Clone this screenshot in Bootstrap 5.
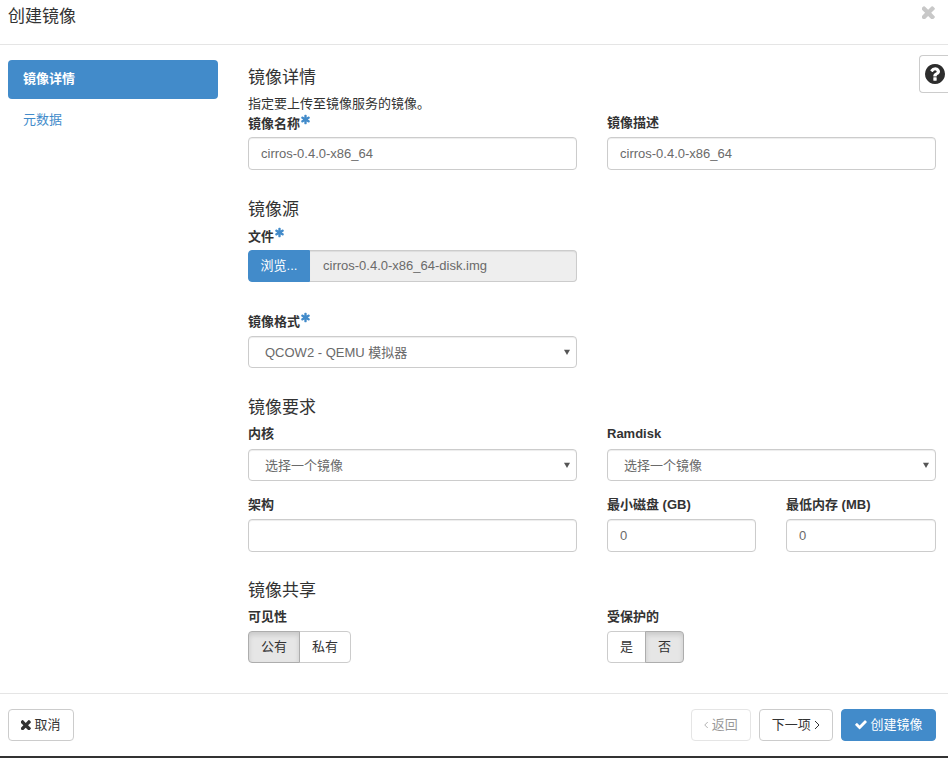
<!DOCTYPE html>
<html lang="zh-CN">
<head>
<meta charset="utf-8">
<title>创建镜像</title>
<link href="https://cdn.jsdelivr.net/npm/bootstrap@5.3.0/dist/css/bootstrap.min.css" rel="stylesheet">
<style>
html,body{height:100%}
body{margin:0;background:#fff;color:#333;font-family:"Liberation Sans","Noto Sans CJK SC",sans-serif;font-size:13px;line-height:18.57px;height:758px;overflow:hidden;border-bottom:2px solid #333}
.dlg-frame{height:756px;display:flex;flex-direction:column;position:relative}
.dlg-head{height:45px;border-bottom:1px solid #e5e5e5;padding:7px 8px 0;display:flex;justify-content:space-between;flex:none}
.dlg-title{font-size:17px;line-height:20px;margin:0;font-weight:400;color:#333}
.dlg-close{border:0;background:none;padding:0;margin:-1px 5px 0 0;height:13px;width:13px;color:#c8c8c8;line-height:0}
.dlg-body{flex:1;display:flex;padding:15px 12px 0 8px}
.side-col{width:210px;flex:none;margin-right:30px}
.side-col .nav-link{height:39px;padding:10px 15px;font-size:13px;line-height:18.57px;color:#428bca;border-radius:4px}
.side-col .nav-link.active{background:#428bca;color:#fff;font-weight:700}
.side-col .nav-item+.nav-item{margin-top:2px}
.main-col{flex:1;min-width:0}
.main-col .row{--bs-gutter-x:30px;--bs-gutter-y:0}
.sec-title{font-size:17px;line-height:20px;margin:8px 0 6px;font-weight:400;color:#333}
.sec-title.gap-img{margin-top:30px;margin-bottom:7px}
.sec-title.gap-req{margin-top:30px;margin-bottom:7px}
.sec-title.gap-share{margin-top:29px;margin-bottom:7px}
.sec-help{margin:0;line-height:20px;height:20px}
.fld-label{display:block;font-weight:700;margin:0 0 5px;line-height:18px;height:18px;color:#333;white-space:nowrap}
.req-star{width:11px;height:11px;fill:#428bca;display:inline-block;vertical-align:3px}
.form-control.fld-input,.form-select.fld-input{height:33px;padding:6px 12px;font-size:13px;line-height:19px;color:#6a6a6a;border:1px solid #ccc;border-radius:4px;box-shadow:inset 0 1px 1px rgba(0,0,0,.075);font-family:inherit}
.form-select.fld-input{height:32px;margin-top:6px;padding-left:16px;padding-right:24px;background-image:url("data:image/svg+xml,%3Csvg xmlns='http://www.w3.org/2000/svg' viewBox='0 0 8 8'%3E%3Cpath fill='%23555' d='M0 1h8L4 8z'/%3E%3C/svg%3E");background-size:6px 6px;background-position:right 6px center}
.file-pick{display:flex;height:32px}
.file-btn{width:62px;background:#428bca;color:#fff;border:1px solid #428bca;border-radius:4px 0 0 4px;padding:0;font-size:13px;flex:none}
.file-name{flex:1;background:#eee;border:1px solid #ccc;border-left:0;border-radius:0 4px 4px 0;padding:0 13px;color:#6a6a6a;line-height:30px;box-shadow:inset 0 1px 1px rgba(0,0,0,.075)}
.fmt-row{margin-top:30px}
.arch-row{margin-top:15px}
.main-col .row .disk-col{width:179px}
.main-col .row .ram-col{width:180px}
.toggle-grp .btn{height:32px;padding:0 12px;font-size:13px;line-height:30px;color:#333;border:1px solid #ccc;background:#fff;border-radius:4px}
.toggle-grp .btn.active{background:#e6e6e6;border-color:#adadad;color:#333;box-shadow:inset 0 3px 5px rgba(0,0,0,.125)}
.dlg-foot{height:63px;flex:none;border-top:1px solid #e5e5e5;padding:15px 12px 0 8px;display:flex;justify-content:space-between}
.foot-btn{height:32px;font-size:13px;line-height:18px;padding:6px 12px;border:1px solid #ccc;border-radius:4px;color:#333;background:#fff}
.foot-btn:disabled{color:#333;opacity:.5;border-color:#ccc;background:#fff}
.foot-btn.go-btn{background:#428bca;border-color:#428bca;color:#fff;padding-left:12.5px;padding-right:12.5px}
.foot-icon{width:10px;height:10px;fill:currentColor;vertical-align:-1px}
.go-btn .foot-icon{width:12px;height:11px}
.foot-ang{width:6px;height:10px;fill:none;stroke:currentColor;stroke-width:1;vertical-align:-1px}
.foot-ang.back-ang{width:4.5px}
.help-tab{position:absolute;right:0;top:55px;width:29px;height:38px;border:1px solid #ccc;border-right:0;border-radius:4px 0 0 4px;background:#fff;padding:0;display:flex;align-items:center;justify-content:center}
.help-tab svg{width:20px;height:20px;fill:#2d2d2d;margin-left:2px}
</style>
</head>
<body>
<div class="dlg-frame">
  <div class="dlg-head">
    <h1 class="dlg-title">创建镜像</h1>
    <button class="dlg-close" type="button" aria-label="Close"><svg width="13" height="13" viewBox="352 352 1150 1150" fill="currentColor"><path d="M1490 1322q0 40-28 68l-136 136q-28 28-68 28t-68-28l-294-294-294 294q-28 28-68 28t-68-28l-136-136q-28-28-28-68t28-68l294-294-294-294q-28-28-28-68t28-68l136-136q28-28 68-28t68 28l294 294 294-294q28-28 68-28t68 28l136 136q28 28 28 68t-28 68l-294 294 294 294q28 28 28 68z"/></svg></button>
  </div>
  <div class="dlg-body">
    <div class="side-col">
      <ul class="nav nav-pills flex-column">
        <li class="nav-item"><a class="nav-link active" href="#">镜像详情</a></li>
        <li class="nav-item"><a class="nav-link" href="#">元数据</a></li>
      </ul>
    </div>
    <div class="main-col">
      <h4 class="sec-title">镜像详情</h4>
      <p class="sec-help">指定要上传至镜像服务的镜像。</p>
      <div class="row">
        <div class="col-6">
          <label class="fld-label">镜像名称<svg class="req-star" viewBox="0 0 1792 1792"><path d="M1546 1050q46 26 59.5 77.5t-12.5 97.5l-64 110q-26 46-77.5 59.5t-97.5-12.5l-266-153v307q0 52-38 90t-90 38h-128q-52 0-90-38t-38-90v-307l-266 153q-46 26-97.5 12.5t-77.5-59.5l-64-110q-26-46-12.5-97.5t59.5-77.5l266-154-266-154q-46-26-59.5-77.5t12.5-97.5l64-110q26-46 77.5-59.5t97.5 12.5l266 153v-307q0-52 38-90t90-38h128q52 0 90 38t38 90v307l266-153q46-26 97.5-12.5t77.5 59.5l64 110q26 46 12.5 97.5t-59.5 77.5l-266 154z"/></svg></label>
          <input class="form-control fld-input" value="cirros-0.4.0-x86_64">
        </div>
        <div class="col-6">
          <label class="fld-label">镜像描述</label>
          <input class="form-control fld-input" value="cirros-0.4.0-x86_64">
        </div>
      </div>

      <h4 class="sec-title gap-img">镜像源</h4>
      <div class="row">
        <div class="col-6">
          <label class="fld-label">文件<svg class="req-star" viewBox="0 0 1792 1792"><path d="M1546 1050q46 26 59.5 77.5t-12.5 97.5l-64 110q-26 46-77.5 59.5t-97.5-12.5l-266-153v307q0 52-38 90t-90 38h-128q-52 0-90-38t-38-90v-307l-266 153q-46 26-97.5 12.5t-77.5-59.5l-64-110q-26-46-12.5-97.5t59.5-77.5l266-154-266-154q-46-26-59.5-77.5t12.5-97.5l64-110q26-46 77.5-59.5t97.5 12.5l266 153v-307q0-52 38-90t90-38h128q52 0 90 38t38 90v307l266-153q46-26 97.5-12.5t77.5 59.5l64 110q26 46 12.5 97.5t-59.5 77.5l-266 154z"/></svg></label>
          <div class="file-pick"><button class="file-btn" type="button">浏览...</button><div class="file-name">cirros-0.4.0-x86_64-disk.img</div></div>
        </div>
      </div>
      <div class="row fmt-row">
        <div class="col-6">
          <label class="fld-label">镜像格式<svg class="req-star" viewBox="0 0 1792 1792"><path d="M1546 1050q46 26 59.5 77.5t-12.5 97.5l-64 110q-26 46-77.5 59.5t-97.5-12.5l-266-153v307q0 52-38 90t-90 38h-128q-52 0-90-38t-38-90v-307l-266 153q-46 26-97.5 12.5t-77.5-59.5l-64-110q-26-46-12.5-97.5t59.5-77.5l266-154-266-154q-46-26-59.5-77.5t12.5-97.5l64-110q26-46 77.5-59.5t97.5 12.5l266 153v-307q0-52 38-90t90-38h128q52 0 90 38t38 90v307l266-153q46-26 97.5-12.5t77.5 59.5l64 110q26 46 12.5 97.5t-59.5 77.5l-266 154z"/></svg></label>
          <select class="form-select fld-input"><option>QCOW2 - QEMU 模拟器</option></select>
        </div>
      </div>

      <h4 class="sec-title gap-req">镜像要求</h4>
      <div class="row">
        <div class="col-6">
          <label class="fld-label">内核</label>
          <select class="form-select fld-input"><option>选择一个镜像</option></select>
        </div>
        <div class="col-6">
          <label class="fld-label">Ramdisk</label>
          <select class="form-select fld-input"><option>选择一个镜像</option></select>
        </div>
      </div>
      <div class="row arch-row">
        <div class="col-6">
          <label class="fld-label">架构</label>
          <input class="form-control fld-input" value="">
        </div>
        <div class="col-auto disk-col">
          <label class="fld-label">最小磁盘 (GB)</label>
          <input class="form-control fld-input" value="0">
        </div>
        <div class="col-auto ram-col">
          <label class="fld-label">最低内存 (MB)</label>
          <input class="form-control fld-input" value="0">
        </div>
      </div>

      <h4 class="sec-title gap-share">镜像共享</h4>
      <div class="row">
        <div class="col-6">
          <label class="fld-label">可见性</label>
          <div class="btn-group toggle-grp"><button class="btn active" type="button">公有</button><button class="btn" type="button">私有</button></div>
        </div>
        <div class="col-6">
          <label class="fld-label">受保护的</label>
          <div class="btn-group toggle-grp"><button class="btn" type="button">是</button><button class="btn active" type="button">否</button></div>
        </div>
      </div>
    </div>
  </div>
  <div class="dlg-foot">
    <button class="btn foot-btn" type="button"><svg class="foot-icon" viewBox="352 352 1150 1150"><path d="M1490 1322q0 40-28 68l-136 136q-28 28-68 28t-68-28l-294-294-294 294q-28 28-68 28t-68-28l-136-136q-28-28-28-68t28-68l294-294-294-294q-28-28-28-68t28-68l136-136q28-28 68-28t68 28l294 294 294-294q28-28 68-28t68 28l136 136q28 28 28 68t-28 68l-294 294 294 294q28 28 28 68z"/></svg> 取消</button>
    <div class="d-flex gap-2">
      <button class="btn foot-btn" type="button" disabled><svg class="foot-ang back-ang" viewBox="0 0 6 10"><path d="M5 1 1 5l4 4"/></svg> 返回</button>
      <button class="btn foot-btn" type="button">下一项 <svg class="foot-ang" viewBox="0 0 6 10"><path d="M1 1l4 4-4 4"/></svg></button>
      <button class="btn foot-btn go-btn" type="button"><svg class="foot-icon" viewBox="100 300 1600 1200"><path d="M1671 566q0 40-28 68l-724 724-136 136q-28 28-68 28t-68-28l-136-136-362-362q-28-28-28-68t28-68l136-136q28-28 68-28t68 28l294 295 656-657q28-28 68-28t68 28l136 136q28 28 28 68z"/></svg> 创建镜像</button>
    </div>
  </div>
  <button class="help-tab" type="button" aria-label="Help"><svg viewBox="128 128 1536 1536"><path d="M1024 1376v-192q0-14-9-23t-23-9h-192q-14 0-23 9t-9 23v192q0 14 9 23t23 9h192q14 0 23-9t9-23zm256-672q0-88-55.5-163t-138.5-116-170-41q-243 0-371 213-15 24 8 42l132 100q7 6 19 6 16 0 25-12 53-68 86-92 34-24 86-24 48 0 85.5 26t37.5 59q0 38-20 61t-68 45q-63 28-115.5 86.5t-52.5 125.5v36q0 14 9 23t23 9h192q14 0 23-9t9-23q0-19 21.5-49.5t54.5-49.5q32-18 49-28.5t46-35 44.5-48 28-60.5 12.5-81zm384 192q0 209-103 385.5t-279.5 279.5-385.5 103-385.5-103-279.5-279.5-103-385.5 103-385.5 279.5-279.5 385.5-103 385.5 103 279.5 279.5 103 385.5z"/></svg></button>
</div>
<script src="https://cdn.jsdelivr.net/npm/bootstrap@5.3.0/dist/js/bootstrap.bundle.min.js"></script>
</body>
</html>
